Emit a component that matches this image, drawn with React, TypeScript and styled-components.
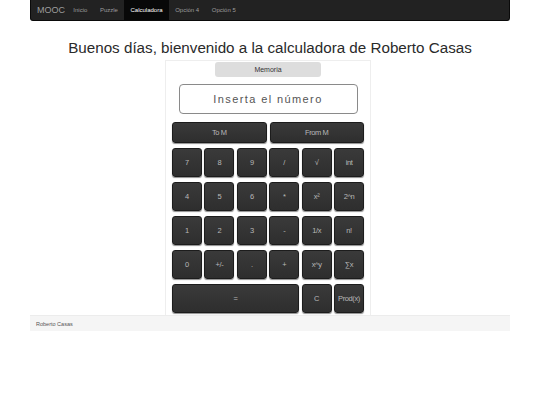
import * as React from "react";
import styled, { createGlobalStyle } from "styled-components";

const GlobalStyle = createGlobalStyle`
  html, body {
    margin: 0;
    padding: 0;
    background: #ffffff;
    font-family: "Liberation Sans", Arial, sans-serif;
  }
`;

const Page = styled.div`
  width: 480px;
  margin: 0 auto;
`;

const NavBar = styled.nav`
  height: 21px;
  background: #222222;
  border: 1px solid #0a0a0a;
  border-top: none;
  border-radius: 0 0 3px 3px;
  display: flex;
  align-items: stretch;
  padding-left: 6px;
  box-sizing: border-box;
`;

const Brand = styled.a`
  color: #9d9d9d;
  font-size: 9px;
  display: flex;
  align-items: center;
  padding-right: 2px;
`;

const NavLink = styled.a<{ $active?: boolean }>`
  color: ${(p) => (p.$active ? "#ffffff" : "#9d9d9d")};
  background: ${(p) => (p.$active ? "#080808" : "transparent")};
  font-size: 6px;
  display: flex;
  align-items: center;
  padding: 0 6.3px;
`;

const Title = styled.h1`
  margin: 18px 0 3px;
  text-align: center;
  font-weight: normal;
  font-size: 15.2px;
  line-height: 18px;
  color: #2a2a2a;
`;

const Panel = styled.div`
  width: 206px;
  margin-left: 135px;
  box-sizing: border-box;
  border: 1px solid #eeeeee;
  border-bottom: none;
  padding: 1px 6px 2px;
  display: flex;
  flex-direction: column;
  align-items: center;
`;

const Memory = styled.div`
  width: 106px;
  height: 15px;
  background: #dddddd;
  border-radius: 3px;
  font-size: 7px;
  color: #333333;
  display: flex;
  align-items: center;
  justify-content: center;
`;

const NumberInput = styled.input`
  margin-top: 7px;
  width: 179px;
  height: 30px;
  box-sizing: border-box;
  border: 1px solid #8a8a8a;
  border-radius: 4px;
  font-family: "Liberation Sans", Arial, sans-serif;
  font-size: 11px;
  letter-spacing: 1.4px;
  text-align: center;
  outline: none;
  &::placeholder {
    color: #555555;
  }
`;

const MemoryRow = styled.div`
  margin-top: 8px;
  width: 192px;
  display: grid;
  grid-template-columns: 1fr 1fr;
  gap: 3px;
`;

const Keypad = styled.div`
  margin-top: 5px;
  width: 192px;
  display: grid;
  grid-template-columns: repeat(6, 1fr);
  column-gap: 2.4px;
  row-gap: 5px;
`;

const Key = styled.button<{ $span?: number; $tall?: boolean }>`
  grid-column: span ${(p) => p.$span ?? 1};
  height: ${(p) => (p.$tall ? 29 : 21)}px;
  padding: 0;
  background: linear-gradient(#3a3a3a, #2e2e2e);
  border: 1px solid #1c1c1c;
  border-radius: 3px;
  box-shadow: 0 1px 1px rgba(0, 0, 0, 0.45);
  color: #b8b8b8;
  font-family: "Liberation Sans", Arial, sans-serif;
  font-size: 7.5px;
  letter-spacing: -0.4px;
  white-space: nowrap;
  overflow: hidden;
`;

const Footer = styled.footer`
  height: 16px;
  background: #f5f5f5;
  border-top: 1px solid #ececec;
  box-sizing: border-box;
  padding-left: 6px;
  display: flex;
  align-items: center;
  font-size: 5.5px;
  color: #555555;
`;

const links = ["Inicio", "Puzzle", "Calculadora", "Opción 4", "Opción 5"];

const keys: { label: string; span?: number }[] = [
  { label: "7" }, { label: "8" }, { label: "9" }, { label: "/" }, { label: "√" }, { label: "int" },
  { label: "4" }, { label: "5" }, { label: "6" }, { label: "*" }, { label: "x²" }, { label: "2^n" },
  { label: "1" }, { label: "2" }, { label: "3" }, { label: "-" }, { label: "1/x" }, { label: "n!" },
  { label: "0" }, { label: "+/-" }, { label: "." }, { label: "+" }, { label: "x^y" }, { label: "∑x" },
  { label: "=", span: 4 }, { label: "C" }, { label: "Prod(x)" },
];

export default function App() {
  return (
    <Page>
      <GlobalStyle />
      <NavBar>
        <Brand>MOOC</Brand>
        {links.map((l) => (
          <NavLink key={l} $active={l === "Calculadora"}>
            {l}
          </NavLink>
        ))}
      </NavBar>
      <Title>Buenos días, bienvenido a la calculadora de Roberto Casas</Title>
      <Panel>
        <Memory>Memoria</Memory>
        <NumberInput placeholder="Inserta el número" />
        <MemoryRow>
          <Key>To M</Key>
          <Key>From M</Key>
        </MemoryRow>
        <Keypad>
          {keys.map((k) => (
            <Key key={k.label} $span={k.span} $tall>
              {k.label}
            </Key>
          ))}
        </Keypad>
      </Panel>
      <Footer>Roberto Casas</Footer>
    </Page>
  );
}
